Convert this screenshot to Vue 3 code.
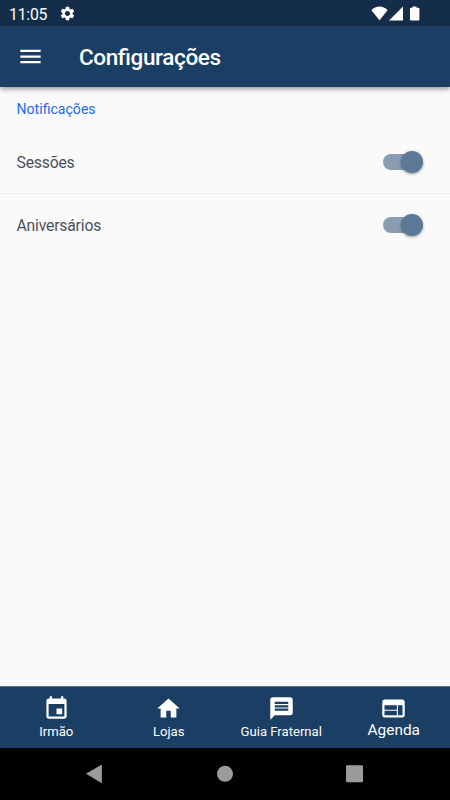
<script setup>
import { ref } from 'vue'

const settings = ref([
  { label: 'Sessões', on: true },
  { label: 'Aniversários', on: true },
])

const tabs = [
  {
    label: 'Irmão',
    icon: 'M17 12h-5v5h5v-5zM16 1v2H8V1H6v2H5c-1.11 0-1.99.9-1.99 2L3 19c0 1.1.89 2 2 2h14c1.1 0 2-.9 2-2V5c0-1.1-.9-2-2-2h-1V1h-2zm3 18H5V8h14v11z',
  },
  { label: 'Lojas', icon: 'M10 20v-6h4v6h5v-8h3L12 3 2 12h3v8z' },
  {
    label: 'Guia Fraternal',
    icon: 'M20 2H4c-1.1 0-1.99.9-1.99 2L2 22l4-4h14c1.1 0 2-.9 2-2V4c0-1.1-.9-2-2-2zm-2 12H6v-2h12v2zm0-3H6V9h12v2zm0-3H6V6h12v2z',
  },
  {
    label: 'Agenda',
    active: true,
    icon: 'M20 4H4c-1.1 0-1.99.9-1.99 2L2 18c0 1.1.9 2 2 2h16c1.1 0 2-.9 2-2V6c0-1.1-.9-2-2-2zm-5 14H4v-4h11v4zm0-5H4V9h11v4zm5 5h-4V9h4v9z',
  },
]
</script>

<template>
  <div class="screen">
    <div class="statusBar">
      <span class="clock">11:05</span>
      <svg class="gear" viewBox="0 0 24 24">
        <path
          d="M19.14 12.94c.04-.3.06-.61.06-.94 0-.32-.02-.64-.07-.94l2.03-1.58c.18-.14.23-.41.12-.61l-1.92-3.32c-.12-.22-.37-.29-.59-.22l-2.39.96c-.5-.38-1.03-.7-1.62-.94l-.36-2.54c-.04-.24-.24-.41-.48-.41h-3.84c-.24 0-.43.17-.47.41l-.36 2.54c-.59.24-1.13.57-1.62.94l-2.39-.96c-.22-.08-.47 0-.59.22L2.74 8.87c-.12.21-.08.47.12.61l2.03 1.58c-.05.3-.09.63-.09.94s.02.64.07.94l-2.03 1.58c-.18.14-.23.41-.12.61l1.92 3.32c.12.22.37.29.59.22l2.39-.96c.5.38 1.03.7 1.62.94l.36 2.54c.05.24.24.41.48.41h3.84c.24 0 .44-.17.47-.41l.36-2.54c.59-.24 1.13-.56 1.62-.94l2.39.96c.22.08.47 0 .59-.22l1.92-3.32c.12-.22.07-.47-.12-.61l-2.01-1.58zM12 15.6c-1.98 0-3.6-1.62-3.6-3.6s1.62-3.6 3.6-3.6 3.6 1.62 3.6 3.6-1.62 3.6-3.6 3.6z"
        />
      </svg>
      <svg class="signals" viewBox="0 0 50 16">
        <path d="M0.4 4.2C4.8 -0.7 12.2 -0.7 16.6 4.2L8.5 14.2Z" />
        <path d="M18 14.6L32 0.6V14.6Z" />
        <path d="M41.5 0.4h4v1.3h1.9a1 1 0 0 1 1 1V13.6a1 1 0 0 1-1 1h-7.4a1 1 0 0 1-1-1V2.7a1 1 0 0 1 1-1h1.5z" />
      </svg>
    </div>

    <header class="appBar">
      <svg class="menu" viewBox="0 0 24 24">
        <path d="M3 18h18v-2H3v2zm0-5h18v-2H3v2zm0-7v2h18V6H3z" />
      </svg>
      <h1>Configurações</h1>
    </header>

    <main>
      <h2>Notificações</h2>
      <div v-for="item in settings" :key="item.label" class="row">
        <span class="label">{{ item.label }}</span>
        <button
          class="toggle"
          :class="{ on: item.on }"
          :aria-label="item.label"
          @click="item.on = !item.on"
        >
          <span class="thumb"></span>
        </button>
      </div>
    </main>

    <nav class="tabs">
      <div v-for="tab in tabs" :key="tab.label" class="tab" :class="{ active: tab.active }">
        <svg viewBox="0 0 24 24"><path :d="tab.icon" /></svg>
        <span>{{ tab.label }}</span>
      </div>
    </nav>

    <div class="systemBar">
      <svg viewBox="0 0 450 52">
        <path d="M86 25.8L101 16.9a.6.6 0 0 1 .9.5V34.3a.6.6 0 0 1-.9.5Z" />
        <circle cx="225" cy="25.8" r="8" />
        <rect x="346" y="17.2" width="17" height="17" rx="1" />
      </svg>
    </div>
  </div>
</template>

<style>
body {
  margin: 0;
}
</style>

<style scoped>
.screen {
  width: 450px;
  height: 800px;
  display: flex;
  flex-direction: column;
  overflow: hidden;
  background: #fafafa;
  font-family: Roboto, sans-serif;
}
svg {
  display: block;
  fill: #fff;
}
.statusBar {
  height: 26px;
  flex: none;
  display: flex;
  align-items: center;
  box-sizing: border-box;
  padding: 1px 1px 0 9px;
  background: #142d4a;
  color: #fff;
}
.clock {
  width: 50px;
  padding-top: 2px;
  font-size: 15.75px;
  line-height: 20px;
  letter-spacing: -0.2px;
}
.gear {
  width: 17px;
  height: 17px;
}
.signals {
  width: 50px;
  height: 16px;
  margin-left: auto;
  margin-right: 28px;
}
.appBar {
  height: 61px;
  flex: none;
  display: flex;
  align-items: center;
  padding-left: 17px;
  background: #1a3e64;
  box-shadow: 0 2px 5px rgba(0, 0, 0, 0.4);
}
.menu {
  width: 27px;
  height: 27px;
}
h1 {
  margin: 0 0 0 35px;
  color: #fff;
  font-size: 22.5px;
  line-height: 28px;
  font-weight: 500;
  letter-spacing: -0.38px;
  font-feature-settings: 'liga' 1;
}
main {
  flex: 1;
}
h2 {
  margin: 0;
  padding: 12px 16.5px 0;
  height: 31px;
  color: #1a6cf0;
  font-size: 14.1px;
  line-height: 21px;
  font-weight: 400;
}
.row {
  height: 63px;
  display: flex;
  align-items: center;
  justify-content: space-between;
  box-sizing: border-box;
  padding: 0 27px 0 16.5px;
  color: #4a515d;
  font-size: 15.75px;
}
.label {
  padding-top: 1px;
  letter-spacing: -0.2px;
}
.row + .row {
  border-top: 1px solid #ececec;
}
.toggle {
  width: 40px;
  height: 22px;
  display: flex;
  align-items: center;
  border: 0;
  padding: 0;
  background: linear-gradient(#c4c8cc, #c4c8cc) left center / 37px 16px no-repeat;
  border-radius: 11px;
}
.toggle.on {
  justify-content: flex-end;
  background: none;
}
.toggle.on::before {
  content: '';
  width: 29px;
  height: 16px;
  margin-right: -11px;
  border-radius: 8px 0 0 8px;
  background: #889cb2;
}
.thumb {
  width: 22px;
  height: 22px;
  border-radius: 50%;
  background: #5c7896;
  box-shadow: 0 1px 3px rgba(0, 0, 0, 0.4);
}
.tabs {
  height: 62px;
  flex: none;
  display: grid;
  grid-template-columns: repeat(4, 1fr);
  box-sizing: border-box;
  border-top: 1px solid #5c7285;
  background: #1a3e64;
}
.tab {
  display: flex;
  flex-direction: column;
  align-items: center;
  padding-top: 8px;
  color: #fff;
  font-size: 13.1px;
}
.tab svg {
  width: 27px;
  height: 27px;
}
.tab span {
  margin-top: 1px;
  line-height: 18px;
}
.tab.active {
  font-size: 15.4px;
}
.tab.active span {
  margin-top: -1px;
}
.systemBar {
  height: 52px;
  flex: none;
  background: #000;
}
.systemBar svg {
  width: 450px;
  height: 52px;
  fill: #9b9b9b;
}
</style>
